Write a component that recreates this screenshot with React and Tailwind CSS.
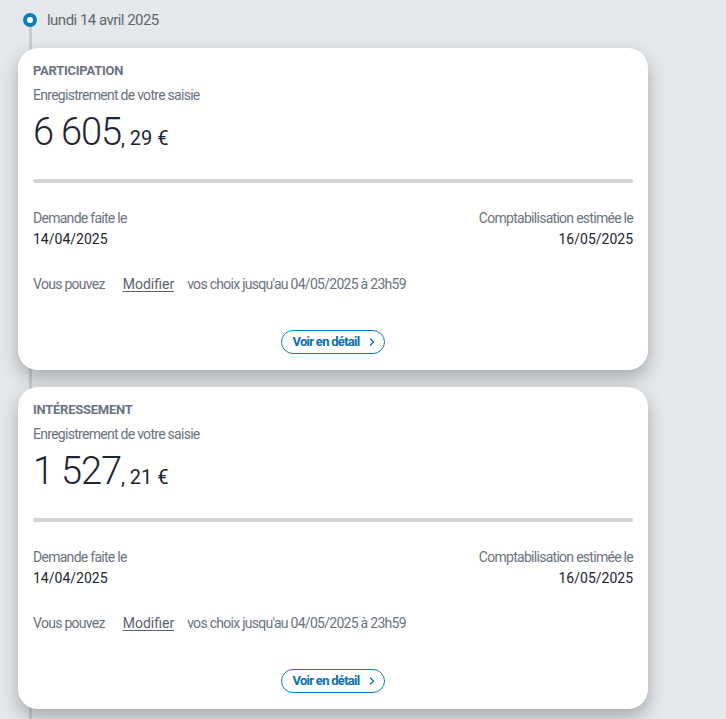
import { ChevronRight } from "lucide-react";

const cards = [
  { title: "PARTICIPATION", whole: "6 605", cents: "29" },
  { title: "INTÉRESSEMENT", whole: "1 527", cents: "21" },
];

function Card({ title, whole, cents }) {
  return (
    <div className="relative w-[630px] rounded-[20px] bg-white px-[15px] pt-[14px] pb-[16px] shadow-[0_8px_18px_rgba(0,0,0,0.28)]">
      <div className="text-[13px] leading-[18px] font-bold tracking-[-0.02em] text-[#6b7380]">{title}</div>
      <div className="mt-[6px] text-[14px] leading-[18px] text-[#6b7380]">Enregistrement de votre saisie</div>
      <div className="mt-[6px] flex items-baseline h-[44px] text-[#1d2530]">
        <span className="text-[38px] leading-[44px] font-light tracking-[-0.03em]">{whole}</span>
        <span className="text-[20px] leading-[44px] tracking-normal">, {cents} €</span>
      </div>
      <div className="mt-[25px] h-[4px] rounded-full bg-[#d4d4d4]" />
      <div className="mt-[26px] flex justify-between">
        <div>
          <div className="text-[14px] leading-[18px] text-[#6b7380]">Demande faite le</div>
          <div className="mt-[2px] text-[14px] leading-[20px] tracking-normal text-[#1d2530]">14/04/2025</div>
        </div>
        <div className="text-right">
          <div className="text-[14px] leading-[18px] text-[#6b7380]">Comptabilisation estimée le</div>
          <div className="mt-[2px] text-[14px] leading-[20px] tracking-normal text-[#1d2530]">16/05/2025</div>
        </div>
      </div>
      <div className="mt-[26px] flex text-[14px] leading-[18px] text-[#6b7380]">
        <span>Vous pouvez</span>
        <span className="ml-[18px] tracking-normal underline underline-offset-2 text-[#5b6370]">Modifier</span>
        <span className="ml-[13px]">vos choix jusqu'au 04/05/2025 à 23h59</span>
      </div>
      <div className="mt-[37px] flex justify-center">
        <button className="flex h-[24px] items-center gap-[6px] rounded-full border-[1.5px] border-[#0b7dc1] pl-[10px] pr-[6px] text-[13px] font-bold text-[#0a6fae]">
          Voir en détail
          <ChevronRight size={12} strokeWidth={2.5} />
        </button>
      </div>
    </div>
  );
}

export default function App() {
  return (
    <div
      className="relative min-h-[719px] bg-[#e6e9ec] pb-[20px]"
      style={{ fontFamily: "Roboto, 'Liberation Sans', sans-serif", letterSpacing: "-0.045em" }}
    >
      <div className="absolute left-[29px] top-[24px] bottom-0 w-[3px] bg-[#c9cdd1]" />
      <div className="relative flex h-[40px] items-center pl-[23px]">
        <div className="h-[14px] w-[14px] rounded-full border-[4px] border-[#0b7dc1] bg-white" />
        <span className="ml-[10px] text-[15px] tracking-[-0.035em] text-[#5f6670]">lundi 14 avril 2025</span>
      </div>
      <div className="relative mt-[8px] flex flex-col gap-[17px] pl-[18px]">
        {cards.map((c) => (
          <Card key={c.title} {...c} />
        ))}
      </div>
    </div>
  );
}
